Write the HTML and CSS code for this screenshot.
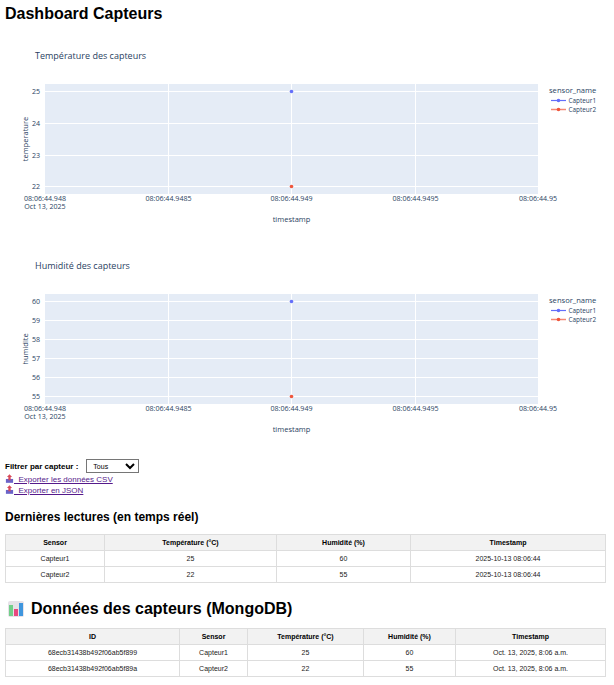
FILE: index.html
```html
<!DOCTYPE html>
<html lang="fr">
<head>
    <meta charset="UTF-8">
    <title>Dashboard Capteurs</title>
    <link rel="stylesheet" href="styles.css">
</head>
<body>
    <h1>Dashboard Capteurs</h1>

    <!-- Graphique température -->
    <svg class="chart" width="604" height="210" viewBox="0 0 604 210">
        <text class="chart-title" x="30" y="29">Température des capteurs</text>
        <rect class="plot-bg" x="40" y="54" width="493" height="110"/>
        <path class="grid" d="M163.5 54V164M286.5 54V164M410.5 54V164M40 61.5H533M40 93.5H533M40 125.5H533M40 156.5H533"/>
        <text class="tick" x="35" y="63.5" text-anchor="end">25</text>
        <text class="tick" x="35" y="95.5" text-anchor="end">24</text>
        <text class="tick" x="35" y="127.5" text-anchor="end">23</text>
        <text class="tick" x="35" y="158.5" text-anchor="end">22</text>
        <text class="axis-title" transform="translate(23 109) rotate(-90)" text-anchor="middle">temperature</text>
        <text class="tick" x="40" y="171" text-anchor="middle">08:06:44.948</text>
        <text class="tick" x="40" y="178.5" text-anchor="middle">Oct 13, 2025</text>
        <text class="tick" x="163.5" y="171" text-anchor="middle">08:06:44.9485</text>
        <text class="tick" x="286.5" y="171" text-anchor="middle">08:06:44.949</text>
        <text class="tick" x="410.5" y="171" text-anchor="middle">08:06:44.9495</text>
        <text class="tick" x="533" y="171" text-anchor="middle">08:06:44.95</text>
        <text class="axis-title" x="286.5" y="192" text-anchor="middle">timestamp</text>
        <circle class="dot-blue" cx="286.5" cy="61.5" r="1.8"/>
        <circle class="dot-red" cx="286.5" cy="156.5" r="1.8"/>
        <text class="legend-title" x="544" y="63">sensor_name</text>
        <path class="line-blue" d="M546 70.5H561"/>
        <circle class="dot-blue" cx="553.5" cy="70.5" r="1.8"/>
        <text class="legend-item" x="563.5" y="73">Capteur1</text>
        <path class="line-red" d="M546 79.5H561"/>
        <circle class="dot-red" cx="553.5" cy="79.5" r="1.8"/>
        <text class="legend-item" x="563.5" y="82">Capteur2</text>
    </svg>

    <!-- Graphique humidité -->
    <svg class="chart" width="604" height="210" viewBox="0 0 604 210">
        <text class="chart-title" x="30" y="29">Humidité des capteurs</text>
        <rect class="plot-bg" x="40" y="54" width="493" height="110"/>
        <path class="grid" d="M163.5 54V164M286.5 54V164M410.5 54V164M40 61.5H533M40 80.5H533M40 99.5H533M40 118.5H533M40 137.5H533M40 156.5H533"/>
        <text class="tick" x="35" y="63.5" text-anchor="end">60</text>
        <text class="tick" x="35" y="82.5" text-anchor="end">59</text>
        <text class="tick" x="35" y="101.5" text-anchor="end">58</text>
        <text class="tick" x="35" y="120.5" text-anchor="end">57</text>
        <text class="tick" x="35" y="139.5" text-anchor="end">56</text>
        <text class="tick" x="35" y="158.5" text-anchor="end">55</text>
        <text class="axis-title" transform="translate(23 109) rotate(-90)" text-anchor="middle">humidite</text>
        <text class="tick" x="40" y="171" text-anchor="middle">08:06:44.948</text>
        <text class="tick" x="40" y="178.5" text-anchor="middle">Oct 13, 2025</text>
        <text class="tick" x="163.5" y="171" text-anchor="middle">08:06:44.9485</text>
        <text class="tick" x="286.5" y="171" text-anchor="middle">08:06:44.949</text>
        <text class="tick" x="410.5" y="171" text-anchor="middle">08:06:44.9495</text>
        <text class="tick" x="533" y="171" text-anchor="middle">08:06:44.95</text>
        <text class="axis-title" x="286.5" y="192" text-anchor="middle">timestamp</text>
        <circle class="dot-blue" cx="286.5" cy="61.5" r="1.8"/>
        <circle class="dot-red" cx="286.5" cy="156.5" r="1.8"/>
        <text class="legend-title" x="544" y="63">sensor_name</text>
        <path class="line-blue" d="M546 70.5H561"/>
        <circle class="dot-blue" cx="553.5" cy="70.5" r="1.8"/>
        <text class="legend-item" x="563.5" y="73">Capteur1</text>
        <path class="line-red" d="M546 79.5H561"/>
        <circle class="dot-red" cx="553.5" cy="79.5" r="1.8"/>
        <text class="legend-item" x="563.5" y="82">Capteur2</text>
    </svg>

    <div class="filter">
        <label for="sensorFilter">Filtrer par capteur :</label>
        <select id="sensorFilter">
            <option>Tous</option>
            <option>Capteur1</option>
            <option>Capteur2</option>
        </select>
    </div>

    <div class="exports">
        <a href="#"><svg class="export-icon" viewBox="0 0 10 10"><path fill="#6a63c8" d="M1 5.5H9V9.8H1Z"/><path fill="#d84a5a" d="M5 0.3L7.8 3.4H6.3V7H3.7V3.4H2.2Z"/></svg>&nbsp; Exporter les données CSV</a>
        <a href="#"><svg class="export-icon" viewBox="0 0 10 10"><path fill="#6a63c8" d="M1 5.5H9V9.8H1Z"/><path fill="#d84a5a" d="M5 0.3L7.8 3.4H6.3V7H3.7V3.4H2.2Z"/></svg>&nbsp; Exporter en JSON</a>
    </div>

    <h2>Dernières lectures (en temps réel)</h2>
    <table>
        <colgroup>
            <col class="w-99"><col class="w-172"><col class="w-134"><col class="w-195">
        </colgroup>
        <thead>
            <tr><th>Sensor</th><th>Température (°C)</th><th>Humidité (%)</th><th>Timestamp</th></tr>
        </thead>
        <tbody>
            <tr><td>Capteur1</td><td>25</td><td>60</td><td>2025-10-13 08:06:44</td></tr>
            <tr><td>Capteur2</td><td>22</td><td>55</td><td>2025-10-13 08:06:44</td></tr>
        </tbody>
    </table>

    <h2 class="title-big">
        <svg class="chart-emoji" viewBox="0 0 16 16">
            <rect width="16" height="16" rx="2" fill="#e6e2e8"/>
            <rect x="1" y="4" width="4" height="11" fill="#72cf8a"/>
            <rect x="6" y="8" width="4" height="7" fill="#e8487f"/>
            <rect x="11" y="2" width="4" height="13" fill="#3f96de"/>
        </svg>
        Données des capteurs (MongoDB)
    </h2>
    <table>
        <colgroup>
            <col class="w-174"><col class="w-68"><col class="w-116"><col class="w-92"><col class="w-150">
        </colgroup>
        <thead>
            <tr><th>ID</th><th>Sensor</th><th>Température (°C)</th><th>Humidité (%)</th><th>Timestamp</th></tr>
        </thead>
        <tbody>
            <tr><td>68ecb31438b492f06ab5f899</td><td>Capteur1</td><td>25</td><td>60</td><td>Oct. 13, 2025, 8:06 a.m.</td></tr>
            <tr><td>68ecb31438b492f06ab5f89a</td><td>Capteur2</td><td>22</td><td>55</td><td>Oct. 13, 2025, 8:06 a.m.</td></tr>
        </tbody>
    </table>
</body>
</html>
```

FILE: styles.css
```css
body {
    margin: 0;
    padding: 0 5px;
    font-family: "Liberation Sans", Arial, sans-serif;
    color: #000;
    background: #fff;
}
h1 {
    margin: 5px 0 7px;
    font-size: 16px;
    line-height: 18px;
}
h2 {
    margin: 0;
    font-size: 12px;
    line-height: 14px;
    font-weight: bold;
}
.chart {
    display: block;
}
.chart text {
    font-family: "Open Sans", sans-serif;
}
.chart-title {
    font-size: 9px;
    fill: #2a3f5f;
}
.plot-bg {
    fill: #e5ecf6;
}
.grid {
    stroke: #fff;
    stroke-width: 1;
    fill: none;
}
.tick {
    font-size: 7.1px;
    fill: #2a3f5f;
}
.axis-title {
    font-size: 7.5px;
    fill: #2a3f5f;
}
.legend-title {
    font-size: 7.6px;
    fill: #2a3f5f;
}
.legend-item {
    font-size: 6.4px;
    fill: #2a3f5f;
}
.dot-blue {
    fill: #636efa;
}
.dot-red {
    fill: #ef553b;
}
.line-blue {
    stroke: #636efa;
    stroke-width: 1.2;
}
.line-red {
    stroke: #ef553b;
    stroke-opacity: 0.7;
    stroke-width: 1.5;
}
.filter {
    display: flex;
    align-items: center;
    gap: 8px;
    margin-top: 9px;
    height: 14px;
    font-size: 8px;
    font-weight: bold;
}
.filter select {
    width: 53px;
    height: 14px;
    padding: 0 0 0 2px;
    font-family: "Liberation Sans", Arial, sans-serif;
    font-size: 7px;
    background: #fff;
    border: 1px solid #767676;
    border-radius: 0;
}
.exports {
    display: flex;
    flex-direction: column;
    align-items: flex-start;
    font-size: 8px;
    line-height: 11px;
    margin-top: 1px;
}
.exports a {
    color: #551a8b;
}
.export-icon {
    width: 9px;
    height: 9px;
    vertical-align: -1px;
}
.exports + h2 {
    margin-top: 14px;
}
table {
    width: 600px;
    margin-top: 10px;
    table-layout: fixed;
    border-collapse: collapse;
    font-size: 7px;
    color: #222;
}
th, td {
    height: 15px;
    padding: 0;
    border: 1px solid #ddd;
    text-align: center;
}
th {
    background: #f2f2f2;
    color: #000;
}
.title-big {
    display: flex;
    align-items: center;
    gap: 7px;
    margin-top: 17px;
    padding-left: 3px;
    font-size: 16px;
    line-height: 18px;
}
.chart-emoji {
    width: 16px;
    height: 16px;
}
.w-99 { width: 99px; }
.w-172 { width: 172px; }
.w-134 { width: 134px; }
.w-195 { width: 195px; }
.w-174 { width: 174px; }
.w-68 { width: 68px; }
.w-116 { width: 116px; }
.w-92 { width: 92px; }
.w-150 { width: 150px; }
```
